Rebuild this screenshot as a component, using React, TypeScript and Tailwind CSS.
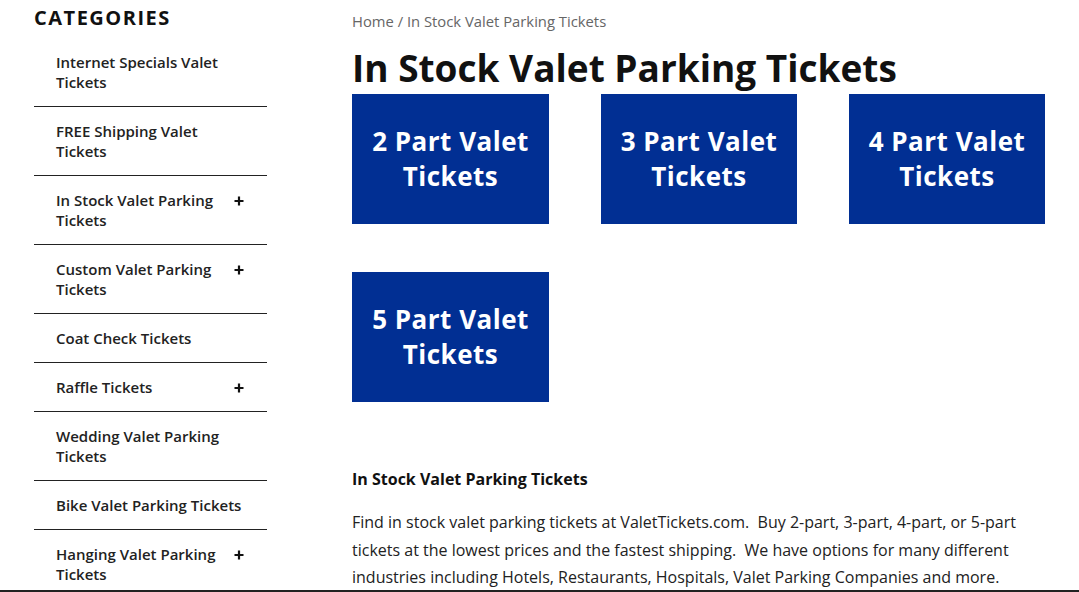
import React from 'react';

const categories = [
  { label: 'Internet Specials Valet Tickets', plus: false },
  { label: 'FREE Shipping Valet Tickets', plus: false },
  { label: 'In Stock Valet Parking Tickets', plus: true },
  { label: 'Custom Valet Parking Tickets', plus: true },
  { label: 'Coat Check Tickets', plus: false },
  { label: 'Raffle Tickets', plus: true },
  { label: 'Wedding Valet Parking Tickets', plus: false },
  { label: 'Bike Valet Parking Tickets', plus: false },
  { label: 'Hanging Valet Parking Tickets', plus: true },
];

const tiles = ['2 Part Valet Tickets', '3 Part Valet Tickets', '4 Part Valet Tickets', '5 Part Valet Tickets'];

const Plus = () => (
  <svg width="10" height="10" viewBox="0 0 10 10" className="mt-[6px] shrink-0">
    <path d="M5 0.5v9M0.5 5h9" stroke="#111" strokeWidth="2.2" />
  </svg>
);

export default function App() {
  return (
    <div
      className="w-[1079px] h-[592px] overflow-hidden bg-white border-b-2 border-[#222] flex text-[#222]"
      style={{ fontFamily: '"Open Sans", "Liberation Sans", sans-serif' }}
    >
      <aside className="ml-[34px] w-[233px] shrink-0">
        <h2 className="pt-[4px] text-[20px] leading-[28px] font-bold tracking-[1.5px] text-[#111]">CATEGORIES</h2>
        <ul className="mt-[6px]">
          {categories.map((c) => (
            <li
              key={c.label}
              className="flex items-start justify-between border-b border-[#222] pl-[22px] pr-[23px] py-[14px]"
            >
              <span className={`text-[15px] leading-[20px] font-semibold ${c.plus ? 'w-[165px]' : 'w-[190px]'}`}>
                {c.label}
              </span>
              {c.plus && <Plus />}
            </li>
          ))}
        </ul>
      </aside>

      <main className="ml-[85px] w-[693px] shrink-0">
        <div className="pt-[10px] text-[14.8px] leading-[22px] text-[#666]">Home / In Stock Valet Parking Tickets</div>
        <h1 className="mt-[10px] text-[37px] leading-[52px] font-bold text-[#111]">
          In Stock Valet Parking Tickets
        </h1>
        <div className="grid grid-cols-[197px_196px_196px] gap-x-[52px] gap-y-[48px]">
          {tiles.map((t) => (
            <a
              key={t}
              className="h-[130px] bg-[#012f93] flex items-center justify-center text-center px-[14px] text-white text-[26px] leading-[35px] font-bold tracking-[0.5px]"
            >
              {t}
            </a>
          ))}
        </div>
        <h3 className="mt-[65px] text-[16px] leading-[24px] font-bold text-[#111]">In Stock Valet Parking Tickets</h3>
        <p className="mt-[18px] text-[16px] leading-[27.5px] text-[#222]">
          Find in stock valet parking tickets at ValetTickets.com.&nbsp; Buy 2-part, 3-part, 4-part, or 5-part tickets at
          the lowest prices and the fastest shipping.&nbsp; We have options for many different industries including
          Hotels, Restaurants, Hospitals, Valet Parking Companies and more.
        </p>
      </main>
    </div>
  );
}
